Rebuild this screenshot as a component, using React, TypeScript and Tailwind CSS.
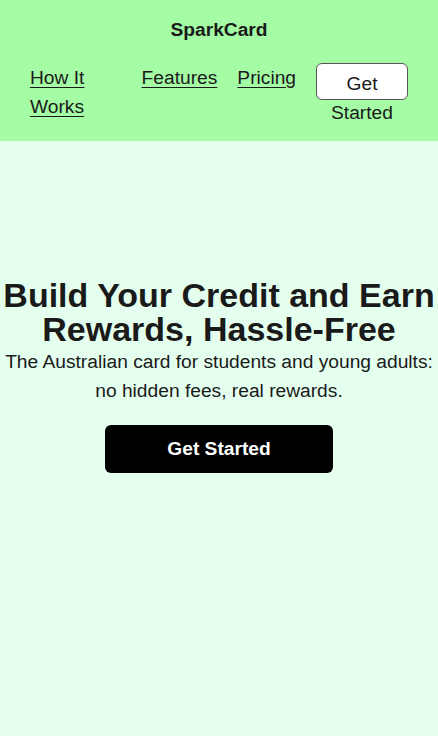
import React from 'react';

const navLinks = ['How It Works', 'Features', 'Pricing'];

export default function App() {
  return (
    <div
      className="min-h-[736px] bg-[#e5ffef] text-[#1a1a1a]"
      style={{ fontFamily: '"Liberation Sans", Arial, sans-serif' }}
    >
      <header className="bg-[#a4fca4] px-[30px] pt-4 pb-5">
        <div className="text-center text-[1.2rem] font-bold leading-[28px]">SparkCard</div>
        <nav className="mt-[19px] flex items-start gap-5 text-[1.2rem] leading-[29px]">
          {navLinks.map((label, i) => (
            <a
              key={label}
              href="#"
              className={`underline underline-offset-[3px] ${i === 0 ? 'min-w-0 flex-1' : 'shrink-0'}`}
            >
              {label}
            </a>
          ))}
          <button className="flex h-[37px] w-[92px] shrink-0 flex-col items-center justify-start overflow-visible rounded-md border border-[#555] bg-white px-3 pt-[5px] text-[1.2rem] leading-[29px]">
            <span className="block">Get</span>
            <span className="block">Started</span>
          </button>
        </nav>
      </header>

      <section className="flex flex-col items-center pt-[138px] text-center">
        <h1 className="text-[34px] font-bold leading-[33.6px]">
          Build Your Credit and Earn Rewards, Hassle-Free
        </h1>
        <p className="mt-[2px] text-[1.2rem] leading-[28.8px]">
          The Australian card for students and young adults: no hidden fees, real rewards.
        </p>
        <button className="mt-[19px] rounded-md bg-black px-[62px] pt-[9px] pb-[10px] text-[1.2rem] font-bold leading-[29px] text-white">
          Get Started
        </button>
      </section>
    </div>
  );
}
